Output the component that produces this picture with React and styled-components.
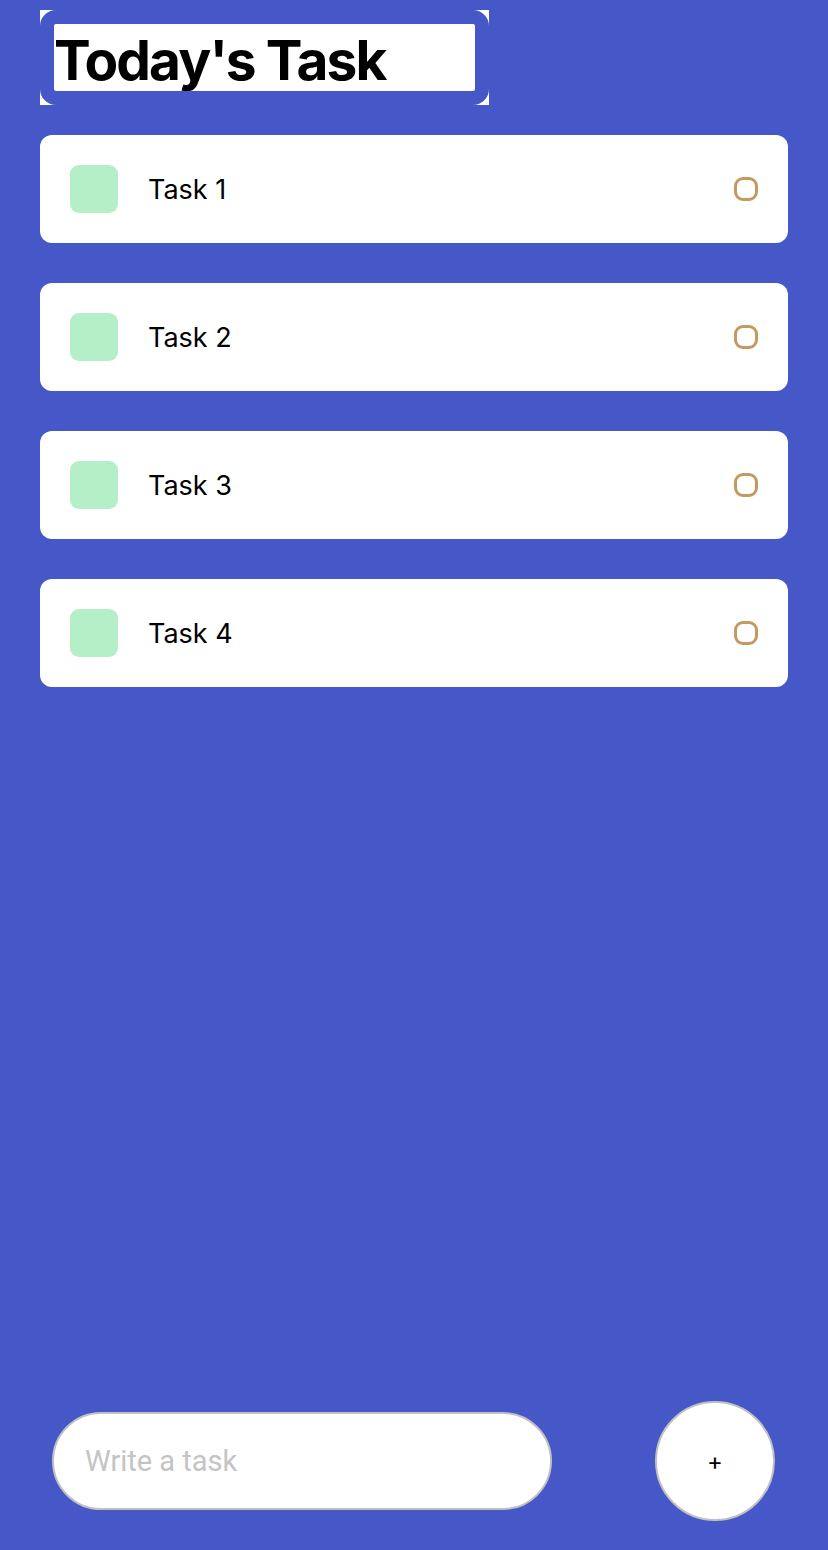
import React from 'react';
import styled, { createGlobalStyle } from 'styled-components';

const GlobalStyle = createGlobalStyle`
    html, body {
        margin: 0;
        padding: 0;
        background-color: #4658c8;
        font-family: Inter, "Noto Sans", sans-serif;
    }
`;

const Screen = styled.div`
    min-height: 100vh;
    display: flex;
    flex-direction: column;
    padding: 10px 40px 0;
    box-sizing: border-box;
`;

const TitleFrame = styled.div`
    width: 449px;
    background-color: #ffffff;
`;

const Title = styled.h1`
    margin: 0;
    border: 14px solid #4658c8;
    border-radius: 16px;
    background-color: #ffffff;
    height: 67px;
    font-size: 55px;
    font-weight: 700;
    letter-spacing: -1.9px;
    line-height: 73px;
    color: #000;
    white-space: nowrap;
    overflow: hidden;
`;

const Items = styled.div`
    margin-top: 30px;
    display: flex;
    flex-direction: column;
    gap: 40px;
`;

const Card = styled.div`
    height: 108px;
    background-color: #ffffff;
    border-radius: 12px;
    padding: 0 30px;
    display: flex;
    align-items: center;
    box-sizing: border-box;
`;

const Square = styled.div`
    width: 48px;
    height: 48px;
    border-radius: 9px;
    background-color: #b4efc8;
    flex-shrink: 0;
`;

const Label = styled.span`
    margin-left: 30px;
    flex: 1;
    font-size: 27px;
    color: #000;
`;

const Ring = styled.div`
    width: 24px;
    height: 24px;
    border: 3.5px solid #c49a62;
    border-radius: 9px;
    box-sizing: border-box;
`;

const Footer = styled.div`
    margin: auto -40px 0;
    padding: 0 53px 29px 52px;
    display: flex;
    align-items: center;
    justify-content: space-between;
`;

const TaskInput = styled.input`
    width: 500px;
    height: 98px;
    box-sizing: border-box;
    border: 2px solid #c0c0c0;
    border-radius: 50px;
    background-color: #ffffff;
    padding: 0 31px;
    font-family: Roboto, "Noto Sans", sans-serif;
    font-size: 29px;
    outline: none;

    &::placeholder {
        color: #c4c4c4;
    }
`;

const AddButton = styled.button`
    width: 120px;
    height: 120px;
    border-radius: 50%;
    border: 2px solid #c0c0c0;
    background-color: #ffffff;
    font-family: Inter, sans-serif;
    font-size: 24px;
    color: #000;
    display: flex;
    align-items: center;
    justify-content: center;
    padding: 0;
`;

const tasks = ['Task 1', 'Task 2', 'Task 3', 'Task 4'];

export default function App() {
    return (
        <>
            <GlobalStyle />
            <Screen>
                <TitleFrame>
                    <Title>Today's Task</Title>
                </TitleFrame>
                <Items>
                    {tasks.map(t => (
                        <Card key={t}>
                            <Square />
                            <Label>{t}</Label>
                            <Ring />
                        </Card>
                    ))}
                </Items>
                <Footer>
                    <TaskInput placeholder="Write a task" />
                    <AddButton>+</AddButton>
                </Footer>
            </Screen>
        </>
    );
}
